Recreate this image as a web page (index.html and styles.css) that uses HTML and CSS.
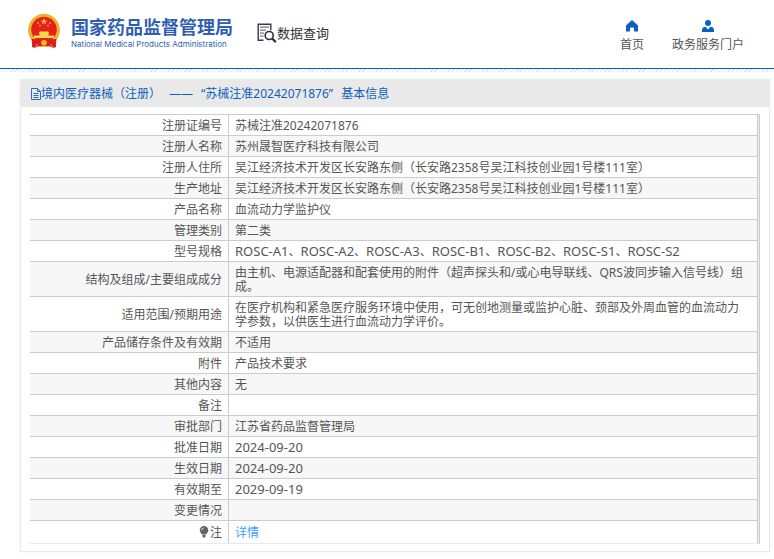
FILE: index.html
```html
<!DOCTYPE html>
<html lang="zh-CN">
<head>
<meta charset="utf-8">
<meta name="viewport" content="width=device-width, initial-scale=1">
<title>国家药品监督管理局 数据查询</title>
<link rel="stylesheet" href="styles.css">
</head>
<body>
<header class="site-header">
  <a class="brand" href="#">
    <svg class="emblem" viewBox="0 0 34 36" aria-hidden="true">
      <path d="M5.500 25L5 34Q8 35.500 11 33.500L17 33L23 33.500Q26 35.500 29 34L28.500 25Z" fill="#d9201c"/>
      <ellipse cx="17" cy="17" rx="15.900" ry="16.300" fill="#f3b92c"/>
      <ellipse cx="17" cy="17" rx="14.600" ry="15" fill="none" stroke="#dd9a2d" stroke-width=".7" stroke-dasharray="2 1.200"/>
      <circle cx="17" cy="16.500" r="12.800" fill="#e3231b"/>
      <path d="M17 5l.9 2.400h2.600l-2.100 1.600.8 2.500-2.200-1.500-2.200 1.500.8-2.500-2.100-1.600h2.600z" fill="#ffb83a"/>
      <g fill="#f9a83a"><circle cx="11" cy="10" r=".9"/><circle cx="13" cy="12.600" r=".9"/><circle cx="21" cy="12.600" r=".9"/><circle cx="23" cy="10" r=".9"/></g>
      <path d="M13 18.500h8l1.500 2h-11zM12.500 20.500h9v2h-9zM7 22.500h20v2.500H7z" fill="#ffd84a"/>
      <path d="M4.500 26q7-.5 9 2.500h7q2-3 9-2.500l-1 7h-23z" fill="#d9201c"/>
      <circle cx="17" cy="29.800" r="2.800" fill="#f3b92c"/>
      <path d="M8 34.500l3-3.500M26 34.500l-3-3.500M13 33.500h8" stroke="#f3b92c" stroke-width=".9"/>
    </svg>
    <span class="brand-text">
      <span class="brand-cn">国家药品监督管理局</span>
      <span class="brand-en">National Medical Products Administration</span>
    </span>
  </a>
  <a class="query" href="#">
    <svg class="query-icon" viewBox="0 0 20 20" aria-hidden="true">
      <path d="M6.500 17.200H1.200V1.200h12.600v6" fill="none" stroke="#3a3a48" stroke-width="1.400"/>
      <path d="M3 4.200h9M3 7.200h6M3 10.200h4M3 13.200h3.500" stroke="#777783" stroke-width="1.200"/>
      <circle cx="12.200" cy="12.500" r="4" fill="#fff" stroke="#2d2d3d" stroke-width="1.600"/>
      <path d="M15.200 15.500l3.600 3.600" stroke="#2d2d3d" stroke-width="2.200"/>
    </svg>
    <span>数据查询</span>
  </a>
  <nav class="nav">
    <a class="nav-link" href="#">
      <svg class="nav-icon" viewBox="0 0 12 12" aria-hidden="true"><path d="M6 0L0 5.500V11.500h4V8.500Q4 7.500 5 7.500h2q1 0 1 1V11.500h4V5.500z" fill="#0a5fc0"/></svg>
      <span>首页</span>
    </a>
    <a class="nav-link" href="#">
      <svg class="nav-icon" viewBox="0 0 12 12" aria-hidden="true"><circle cx="6" cy="3" r="3" fill="#0a5fc0"/><path d="M0 12V10Q0 7 3.500 6.800L6 9.500l2.500-2.700Q12 7 12 10v2z" fill="#0a5fc0"/></svg>
      <span>政务服务门户</span>
    </a>
  </nav>
</header>
<main class="page">
  <section class="panel">
    <h1 class="panel-title">
      <svg class="doc-icon" viewBox="0 0 10 12" aria-hidden="true"><path d="M.5 .5h6l3 3v8h-9zM6.500 .5v3h3M2.500 5.500h5M2.500 7.500h5M2.500 9.500h5" fill="none" stroke="#2b6bc4"/></svg>
      <span class="title-text">
        <span>境内医疗器械（注册）</span>
        <span>——</span>
        <span>“苏械注准20242071876”</span>
        <span>基本信息</span>
      </span>
    </h1>
    <div class="table-frame">
      <table class="info">
        <tbody>
          <tr><th scope="row">注册证编号</th><td>苏械注准20242071876</td></tr>
          <tr><th scope="row">注册人名称</th><td>苏州晟智医疗科技有限公司</td></tr>
          <tr><th scope="row">注册人住所</th><td>吴江经济技术开发区长安路东侧（长安路2358号吴江科技创业园1号楼111室）</td></tr>
          <tr><th scope="row">生产地址</th><td>吴江经济技术开发区长安路东侧（长安路2358号吴江科技创业园1号楼111室）</td></tr>
          <tr><th scope="row">产品名称</th><td>血流动力学监护仪</td></tr>
          <tr><th scope="row">管理类别</th><td>第二类</td></tr>
          <tr><th scope="row">型号规格</th><td><span class="code">ROSC-A1</span>、<span class="code">ROSC-A2</span>、<span class="code">ROSC-A3</span>、<span class="code">ROSC-B1</span>、<span class="code">ROSC-B2</span>、<span class="code">ROSC-S1</span>、<span class="code">ROSC-S2</span></td></tr>
          <tr><th scope="row">结构及组成/主要组成成分</th><td>由主机、电源适配器和配套使用的附件（超声探头和/或心电导联线、QRS波同步输入信号线）组成。</td></tr>
          <tr><th scope="row">适用范围/预期用途</th><td>在医疗机构和紧急医疗服务环境中使用，可无创地测量或监护心脏、颈部及外周血管的血流动力学参数，以供医生进行血流动力学评价。</td></tr>
          <tr><th scope="row">产品储存条件及有效期</th><td>不适用</td></tr>
          <tr><th scope="row">附件</th><td>产品技术要求</td></tr>
          <tr><th scope="row">其他内容</th><td>无</td></tr>
          <tr><th scope="row">备注</th><td></td></tr>
          <tr><th scope="row">审批部门</th><td>江苏省药品监督管理局</td></tr>
          <tr><th scope="row">批准日期</th><td><span class="code">2024-09-20</span></td></tr>
          <tr><th scope="row">生效日期</th><td><span class="code">2024-09-20</span></td></tr>
          <tr><th scope="row">有效期至</th><td><span class="code">2029-09-19</span></td></tr>
          <tr><th scope="row">变更情况</th><td></td></tr>
          <tr class="note"><th scope="row"><svg class="bulb" viewBox="0 0 10 12" aria-hidden="true"><path d="M5 0a4.300 4.300 0 0 1 4.300 4.300Q9.300 6.500 7 8.500H3Q.7 6.500.7 4.300A4.300 4.300 0 0 1 5 0zM3.400 9h3.200v1.500L5.800 11.500H4.200l-.8-1z" fill="#606266"/><path d="M2.500 4.500Q2.500 2.200 4.800 2" fill="none" stroke="#fff" stroke-width=".7"/></svg>注</th><td><a class="detail" href="#">详情</a></td></tr>
        </tbody>
      </table>
    </div>
  </section>
</main>
</body>
</html>
```
FILE: styles.css
```css
* {
  box-sizing: border-box;
}

body {
  margin: 0;
  background: #fff;
  color: #555;
  font: 12px/14px "Noto Sans", "Noto Sans CJK SC", sans-serif;
}

a {
  color: inherit;
  text-decoration: none;
}

svg {
  flex: none;
}

.site-header {
  display: flex;
  align-items: flex-start;
  height: 69px;
  padding: 0 30px 0 27px;
  border-bottom: 1px solid #0a5fc0;
}

.brand {
  display: flex;
  gap: 10px;
  padding-top: 13px;
  color: #2f5fb3;
}

.emblem {
  width: 34px;
  height: 36px;
}

.brand-text {
  display: flex;
  flex-direction: column;
  padding-top: 3px;
}

.brand-cn {
  font-size: 18px;
  font-weight: 700;
  line-height: 22px;
}

.brand-en {
  font-family: Inter, sans-serif;
  font-size: 8px;
  line-height: 12px;
  white-space: nowrap;
}

.query {
  display: flex;
  align-items: center;
  margin-left: 24px;
  padding-top: 23px;
  color: #333;
  font-size: 13px;
  line-height: 18px;
}

.query-icon {
  width: 20px;
  height: 20px;
}

.nav {
  display: flex;
  gap: 28px;
  margin-left: auto;
  padding-top: 20px;
}

.nav-link {
  display: flex;
  flex-direction: column;
  align-items: center;
  gap: 6px;
}

.nav-icon {
  width: 12px;
  height: 12px;
}

.page {
  padding: 10px 4px 8px 20px;
  background: repeating-linear-gradient(135deg, #e4e4e4 0 1px, #fff 1px 3px) top / 100% 3px no-repeat;
}

.panel {
  border: 1px solid #e8e8ec;
  border-top: 0;
  box-shadow: 0 0 6px rgba(0, 0, 0, 0.05);
}

.panel-title {
  display: flex;
  align-items: center;
  height: 28px;
  margin: 0 -1px;
  padding: 2px 11px 0;
  background: #e9e9e9;
  border-bottom: 1px solid #e6eaf2;
  color: #0a5fc0;
  font-size: 12px;
  font-weight: 400;
  line-height: 14px;
}

.title-text {
  display: flex;
  flex-wrap: wrap;
  gap: 0 8px;
}

.doc-icon {
  width: 10px;
  height: 12px;
}

.table-frame {
  margin: 7px 9px;
  padding-right: 1px;
  background: #ebebf2;
  border-right: 1px solid #ccccd0;
}

.info {
  width: 100%;
  background: #fff;
  border-bottom: 1px solid #e8e8f0;
  border-spacing: 0;
  table-layout: fixed;
}

.info th,
.info td {
  height: 21px;
  padding: 4px 8px 2px 6px;
  border-top: 1px solid #ccc;
  border-right: 1px solid #ccc;
  font-weight: 400;
}

.info th {
  width: 199px;
  padding-right: 6px;
  text-align: right;
}

.info td {
  text-align: left;
}

.info tr:nth-child(even) {
  background: #f7f7f7;
}

.info .note th,
.info .note td {
  height: 23px;
}

.code {
  font-size: 13px;
  line-height: 12px;
}

.bulb {
  width: 10px;
  height: 12px;
  margin-right: 1px;
  vertical-align: -1px;
}

.detail {
  color: #409eff;
}
```
